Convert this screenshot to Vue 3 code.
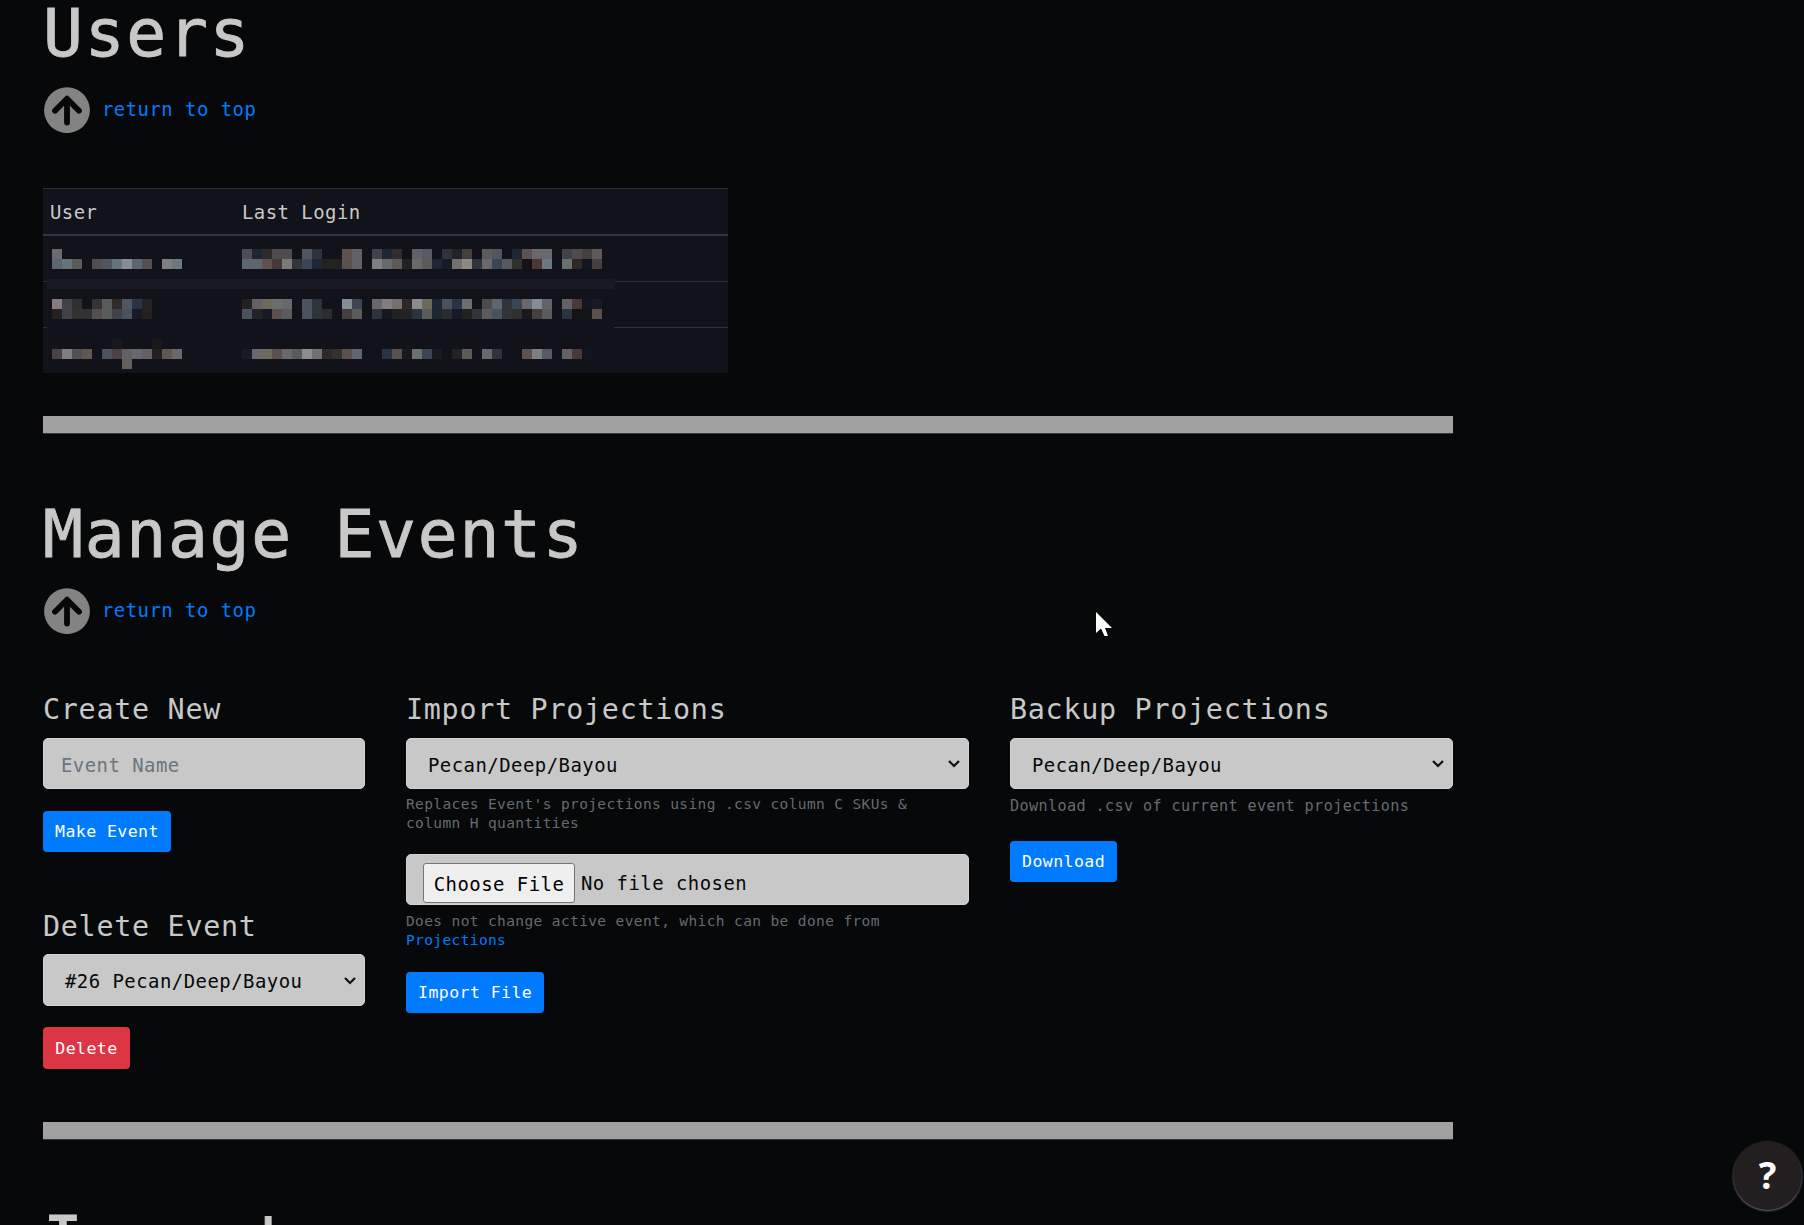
<script setup>
const rows = [
  {
    user: [
      [0, 0, '6b6b6f'],
      '|1|5c666b 64747c 5a5c5c - 534e50 505560 64747c 838d93 5c666b 534e50 - 7d7f83 6b7882',
    ],
    login: [
      '|0|4b4d55 1e2635 2f2a2b 4f4b4c 4f4b4c - 505560 2d333c - - 5e5250 636165 - 404248 1e2635 2f2d2f - 636165 585a63 - 2d333c 232327 463f40 - 5a5c5c 505560 - 1e2635 5e5250 69696d 69696d - 404248 4f4b4c 463f40 5e5a59',
      '|1|5c666b 5c666b 5e5250 4a3838 7b7a7a 32343c 3a4556 1e2635 222223 222223 5a504e 636165 - 7d7f83 69696d 5e5a59 222224 69696d 5e5a59 1e2635 181b25 757070 8e8983 32343c 69696d 3a4556 585a63 303031 141318 4a3838 6b7882 - 6a706d 2f2828 131522 463f40',
    ],
  },
  {
    user: [
      '|0|857b80 404248 2f3032 - 353334 5a5c5c 302a2b 505560 2b3445 232327',
      '|1|242222 404248 323235 333232 534e50 5a5c5c 404248 4a5260 181a25 242120',
    ],
    login: [
      '|0|222223 636165 6b6a5b 6a706d 69696d - 4a5260 2d343c - - 838d93 3a4556 - 69696d 857b80 757070 2f2828 8a8d8d 6b6a5b 1e2635 4a5260 2b3445 6a706d - 4f4b4c 5c666b 2d343c 3a4556 69696d 838d93 5c666b - 636165 4a3838 131522 181b25',
      '|1|4a5260 232327 181b25 5a504e 5a5c5c - 4a5260 2d343c 2b2c2d - 463f40 5a5c5c - 2d343c 151820 222223 232327 2d343c 5a5c5c 1e2635 2b2c2d 181b25 222223 32343c 5a5c5c 4a5260 32343c 303031 18181d 463f40 5a5c5c - 2d343c 141415 131318 5a504e',
    ],
  },
  {
    user: [
      [6, 0, '18181d'],
      [10, 0, '18181d'],
      '|1|4a4244 7d7f83 534e50 625653 - 4a5260 4a4244 626063 69696d 636165 242020 625653 69696d',
      [7, 2, '625f5e'],
    ],
    login: [
      '|1|181b25 69696d 6b6a5b 5a504e 69696d 5a5c5c 8a8d8d 757070 2f2828 333232 5a504e 5c666b - - 2b3445 5a504e 18181d 6a706d 3a4556 181b20 - 232327 5e5a59 - 69696d 2d343c - - 5e5250 7d7f83 585a63 - 636165 4a3838 131522',
    ],
  },
]

// Expands "|row|colour colour -" strings into [column, row, colour] blocks.
function blocks(list) {
  return list.flatMap((item) => {
    if (Array.isArray(item)) return [item]
    const [, y, colours] = item.split('|')
    return colours
      .split(' ')
      .map((c, x) => [x, Number(y), c])
      .filter((b) => b[2] !== '-')
  })
}
</script>

<template>
  <main class="page">
    <h1>Users</h1>
    <a class="return">
      <svg width="47" height="46" viewBox="0 0 47 46">
        <circle cx="24" cy="23.2" r="22.9" fill="#838383" />
        <path d="M24 35.5V12.2M12 23.7L24 11.7L36 23.7" />
      </svg>
      <span>return to top</span>
    </a>

    <div class="table">
      <div class="row head"><span class="c1">User</span><span>Last Login</span></div>
      <div v-for="(row, i) in rows" :key="i" class="row" :class="'r' + (i + 1)">
        <svg class="c1" width="190" height="30" shape-rendering="crispEdges">
          <rect v-for="(b, n) in blocks(row.user)" :key="n" :x="b[0] * 10" :y="b[1] * 10" width="10" height="10" :fill="'#' + b[2]" />
        </svg>
        <svg width="370" height="30" shape-rendering="crispEdges">
          <rect v-for="(b, n) in blocks(row.login)" :key="n" :x="b[0] * 10" :y="b[1] * 10" width="10" height="10" :fill="'#' + b[2]" />
        </svg>
      </div>
      <div class="band"></div>
    </div>

    <div class="rule first"></div>

    <h1>Manage Events</h1>
    <a class="return">
      <svg width="47" height="46" viewBox="0 0 47 46">
        <circle cx="24" cy="23.2" r="22.9" fill="#838383" />
        <path d="M24 35.5V12.2M12 23.7L24 11.7L36 23.7" />
      </svg>
      <span>return to top</span>
    </a>

    <div class="columns">
      <section class="create">
        <h2>Create New</h2>
        <input class="field" type="text" placeholder="Event Name" />
        <button class="btn make">Make Event</button>
        <h2 class="del-title">Delete Event</h2>
        <div class="field select tall">
          <span>#26 Pecan/Deep/Bayou</span>
          <svg width="14" height="10" viewBox="0 0 14 10"><path d="M2 2L7 7L12 2" /></svg>
        </div>
        <button class="btn danger">Delete</button>
      </section>

      <section class="import">
        <h2>Import Projections</h2>
        <div class="field select">
          <span>Pecan/Deep/Bayou</span>
          <svg width="14" height="10" viewBox="0 0 14 10"><path d="M2 2L7 7L12 2" /></svg>
        </div>
        <p class="hint">Replaces Event's projections using .csv column C SKUs &amp;<br />column H quantities</p>
        <div class="field file">
          <button class="choose">Choose File</button>
          <span>No file chosen</span>
        </div>
        <p class="hint below">Does not change active event, which can be done from<br /><a>Projections</a></p>
        <button class="btn make">Import File</button>
      </section>

      <section class="backup">
        <h2>Backup Projections</h2>
        <div class="field select">
          <span>Pecan/Deep/Bayou</span>
          <svg width="14" height="10" viewBox="0 0 14 10"><path d="M2 2L7 7L12 2" /></svg>
        </div>
        <p class="hint single">Download .csv of current event projections</p>
        <button class="btn down">Download</button>
      </section>
    </div>

    <div class="rule"></div>
    <h1>Import</h1>

    <button class="help">?</button>
    <svg class="cursor" width="18" height="26" viewBox="0 0 18 26">
      <path d="M0 0V21L5 16.5L8.5 24H12L9 16H16Z" fill="#fff" />
    </svg>
  </main>
</template>

<style>
body {
  margin: 0;
  background: #060809;
  overflow: hidden;
}
</style>

<style scoped>
* {
  box-sizing: border-box;
}
.page {
  position: relative;
  display: flex;
  flex-direction: column;
  width: 1804px;
  height: 1225px;
  padding-left: 43px;
  overflow: hidden;
  background: #060809;
  color: #c8c8c8;
  font-family: 'DejaVu Sans Mono', monospace;
  font-size: 18.94px;
  letter-spacing: 0.025em;
}
.page > * {
  flex-shrink: 0;
}
h1,
h2,
p {
  margin: 0;
  font-weight: 400;
  white-space: nowrap;
}
h1 {
  font-size: 66.3px;
  line-height: 91px;
  letter-spacing: 0.026em;
  -webkit-text-stroke: 0.9px #c8c8c8;
}
h1:first-child {
  margin-top: -12px;
}
h2 {
  font-size: 28.4px;
  line-height: 39px;
  letter-spacing: 0.025em;
}
.return {
  display: flex;
  align-items: center;
  gap: 12px;
  height: 46px;
  margin-top: 8px;
  color: #007bff;
}
.return span {
  padding-bottom: 3px;
}
.return path {
  fill: none;
  stroke: #060809;
  stroke-width: 5.8;
  stroke-linecap: round;
  stroke-linejoin: round;
}
.table {
  position: relative;
  width: 685px;
  height: 185px;
  margin-top: 55px;
  background: #11121a;
  border-top: 1px solid #303136;
}
.row {
  display: flex;
  height: 46px;
  padding-left: 9px;
}
.row .c1 {
  width: 190px;
}
.row.head {
  height: 47px;
  padding-left: 7px;
  line-height: 47px;
  padding-bottom: 1px;
  border-bottom: 2px solid #34353b;
}
.row.head .c1 {
  width: 192px;
}
.row.head span {
  line-height: 46px;
}
.r1 {
  height: 45px;
  padding-top: 13px;
}
.r2,
.r3 {
  background:
    linear-gradient(#303136, #303136) 0 0 / 4px 1px no-repeat,
    linear-gradient(#303136, #303136) 571px 0 / 114px 1px no-repeat;
}
.r2 {
  padding-top: 18px;
}
.r3 {
  padding-top: 12px;
}
.band {
  position: absolute;
  left: 4px;
  top: 90px;
  width: 568px;
  height: 10px;
  background: #171a21;
}
.rule {
  width: 1410px;
  height: 18px;
  margin-bottom: 55px;
  background: #a1a1a1;
  border-bottom: 1px solid #33383b;
}
.rule.first {
  margin-top: 43px;
}
.columns {
  display: flex;
  height: 432px;
  margin-top: 56px;
}
section {
  display: flex;
  flex-direction: column;
  align-items: flex-start;
}
.create {
  width: 322px;
  margin-right: 41px;
}
.import {
  width: 563px;
  margin-right: 41px;
}
.backup {
  width: 443px;
}
.field {
  width: 100%;
  height: 51px;
  margin: 9px 0 0;
  padding: 2px 17px 0;
  border: 1px solid #ced4da;
  border-radius: 5px;
  background: #c8c8c8;
  color: #060809;
  font: inherit;
  letter-spacing: inherit;
  outline: none;
}
.field::placeholder {
  color: #6c757d;
  opacity: 1;
}
.select {
  display: flex;
  align-items: center;
  justify-content: space-between;
  padding: 2px 7px 0 21px;
}
.select svg {
  margin-bottom: 1px;
}
.select path {
  fill: none;
  stroke: #101010;
  stroke-width: 2.2;
}
.tall {
  height: 52px;
  margin-top: 8px;
}
.btn {
  height: 41px;
  padding: 0 12px;
  border: 0;
  border-radius: 4px;
  background: #007bff;
  color: #fff;
  font: 16.57px 'DejaVu Sans Mono', monospace;
  letter-spacing: 0.025em;
  white-space: nowrap;
}
.make {
  margin-top: 22px;
}
.down {
  margin-top: 25px;
}
.danger {
  width: 87px;
  height: 42px;
  margin-top: 21px;
  background: #dc3545;
}
.del-title {
  margin-top: 55px;
}
.hint {
  margin-top: 6px;
  margin-bottom: -1px;
  color: #646c73;
  font-size: 14.54px;
  line-height: 19px;
  letter-spacing: 0.025em;
}
.hint a {
  color: #007bff;
}
.below {
  margin-top: 7px;
  margin-bottom: 0;
}
.single {
  margin-top: 8px;
  margin-bottom: 0;
  font-size: 15.16px;
}
.file {
  display: flex;
  align-items: flex-start;
  gap: 6px;
  margin-top: 22px;
  padding: 8px 0 0 16px;
  line-height: 41px;
}
.choose {
  width: 152px;
  height: 40px;
  padding: 1px 0 0;
  border: 1px solid #767676;
  border-radius: 3px;
  background: #efefef;
  color: #000;
  font: inherit;
  line-height: 36px;
  letter-spacing: inherit;
}
.help {
  position: absolute;
  left: 1733px;
  top: 1141px;
  width: 69px;
  height: 69px;
  padding: 0 0 2px;
  border: 0;
  border-radius: 50%;
  background: #231f20;
  color: #fff;
  font: 700 37px 'Open Sans', sans-serif;
  box-shadow: 0 1px 2px #6b7280;
}
.cursor {
  position: absolute;
  left: 1096px;
  top: 612px;
}
</style>
